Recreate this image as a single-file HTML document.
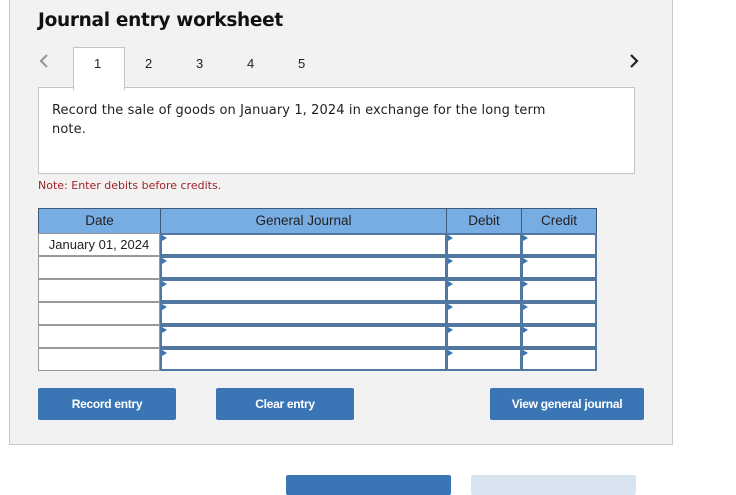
<!DOCTYPE html><html><head><style>
body{margin:0;width:736px;height:487px;background:#fff;position:relative;font-family:"Liberation Sans",sans-serif;overflow:hidden}
.a{position:absolute}
#panel{left:9px;top:-2px;width:662px;height:445px;background:#f2f2f2;border:1px solid #c8c8c8}
h1{position:absolute;left:38px;top:10px;margin:0;font:bold 18.5px "DejaVu Sans",sans-serif;color:#111;letter-spacing:-0.3px}
.tab{position:absolute;top:56px;font-size:13px;color:#222}
.v{font-family:"DejaVu Sans",sans-serif}
.btn{position:absolute;background:#3a76b6;color:#fff;font-weight:bold;font-size:12px;text-align:center;border-radius:2px;letter-spacing:-0.3px}
.h{position:absolute;top:208px;background:#78ade3;border:1px solid #3d5a7a;font-size:13.5px;text-align:center;line-height:24px;color:#222;box-sizing:border-box;height:26px}
.d{position:absolute;left:38px;width:122px;height:23px;background:#fff;border:1px solid #999;box-sizing:border-box}
.i{position:absolute;background:#fff;border:2px solid #5277a0;box-sizing:border-box;height:23px}
.i:before{content:"";position:absolute;left:0;top:0;border-left:5px solid #3a76b6;border-top:3px solid transparent;border-bottom:3px solid transparent}
</style></head><body>
<div class="a" id="panel"></div>
<h1>Journal entry worksheet</h1>
<svg class="a" style="left:38px;top:53px" width="12" height="16"><path d="M9 2 L3 8 L9 14" stroke="#999" stroke-width="2.2" fill="none"/></svg>
<svg class="a" style="left:628px;top:53px" width="12" height="16"><path d="M3 2 L9 8 L3 14" stroke="#222" stroke-width="2.2" fill="none"/></svg>
<div class="a" style="left:38px;top:87px;width:595px;height:85px;background:#fff;border:1px solid #c4c4c4"></div>
<div class="a" style="left:73px;top:47px;width:50px;height:42px;background:#fff;border:1px solid #c4c4c4;border-bottom:none"></div>
<div class="tab" style="left:94px">1</div><div class="tab" style="left:145px">2</div><div class="tab" style="left:196px">3</div><div class="tab" style="left:247px">4</div><div class="tab" style="left:298px">5</div>
<div class="a v" style="left:52px;top:101px;font-size:13px;color:#222;line-height:19px;width:520px;letter-spacing:0.1px">Record the sale of goods on January 1, 2024 in exchange for the long term note.</div>
<div class="a v" style="left:38px;top:179px;font-size:11px;color:#a0232a">Note: Enter debits before credits.</div>
<div class="h" style="left:38px;width:123px">Date</div>
<div class="h" style="left:160px;width:287px">General Journal</div>
<div class="h" style="left:446px;width:76px">Debit</div>
<div class="h" style="left:521px;width:76px">Credit</div>
<div class="d" style="top:233px;font-size:13px;text-align:center;line-height:22px;color:#222">January 01, 2024</div>
<div class="d" style="top:256px"></div><div class="d" style="top:279px"></div><div class="d" style="top:302px"></div><div class="d" style="top:325px"></div><div class="d" style="top:348px"></div>
<div class="i" style="left:160px;top:233px;width:287px"></div><div class="i" style="left:446px;top:233px;width:76px"></div><div class="i" style="left:521px;top:233px;width:76px"></div>
<div class="i" style="left:160px;top:256px;width:287px"></div><div class="i" style="left:446px;top:256px;width:76px"></div><div class="i" style="left:521px;top:256px;width:76px"></div>
<div class="i" style="left:160px;top:279px;width:287px"></div><div class="i" style="left:446px;top:279px;width:76px"></div><div class="i" style="left:521px;top:279px;width:76px"></div>
<div class="i" style="left:160px;top:302px;width:287px"></div><div class="i" style="left:446px;top:302px;width:76px"></div><div class="i" style="left:521px;top:302px;width:76px"></div>
<div class="i" style="left:160px;top:325px;width:287px"></div><div class="i" style="left:446px;top:325px;width:76px"></div><div class="i" style="left:521px;top:325px;width:76px"></div>
<div class="i" style="left:160px;top:348px;width:287px"></div><div class="i" style="left:446px;top:348px;width:76px"></div><div class="i" style="left:521px;top:348px;width:76px"></div>
<div class="btn" style="left:38px;top:388px;width:138px;height:32px;line-height:32px">Record entry</div>
<div class="btn" style="left:216px;top:388px;width:138px;height:32px;line-height:32px">Clear entry</div>
<div class="btn" style="left:490px;top:388px;width:154px;height:32px;line-height:32px">View general journal</div>
<div class="btn" style="left:286px;top:475px;width:165px;height:20px"></div>
<div class="btn" style="left:471px;top:475px;width:165px;height:20px;background:#d9e4f1"></div>
</body></html>
